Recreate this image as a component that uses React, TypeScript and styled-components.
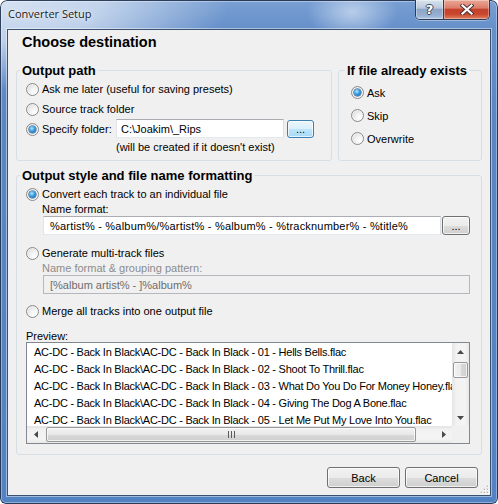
import React from "react";
import styled, { createGlobalStyle, css } from "styled-components";

const Global = createGlobalStyle`
  html, body { margin: 0; padding: 0; background: #ffffff; }
  body { font-family: "Liberation Sans", Arial, sans-serif; font-size: 11px; color: #000; }
  * { box-sizing: border-box; }
`;

const UI_FONT = `"Liberation Sans", Arial, sans-serif`;

const Window = styled.div`
  width: 498px;
  height: 504px;
  display: flex;
  flex-direction: column;
  padding: 0 7px 8px 7px;
  border-radius: 7px 7px 6px 6px;
  background:
    radial-gradient(ellipse 230px 90px at 0 0, rgba(214, 226, 242, 1) 0%, rgba(206, 220, 240, 0.85) 45%, rgba(206, 220, 240, 0) 100%),
    radial-gradient(ellipse 45px 28px at 352px 12px, rgba(196, 214, 238, 0.85), rgba(196, 214, 238, 0)),
    linear-gradient(180deg, #7aa0d3 0px, #6690ca 29px, #5a86c4 120px, #5382c2 100%);
  box-shadow: inset 0 0 0 1px rgba(28, 46, 74, 0.9), inset 0 0 0 2px rgba(255, 255, 255, 0.35);
`;

const TitleBar = styled.div`
  height: 29px;
  flex: none;
  display: flex;
  align-items: flex-start;
  padding: 0 1px 0 1px;
`;

const TitleText = styled.div`
  margin-top: 5px;
  line-height: 18px;
  font-family: "Open Sans", ${UI_FONT};
  font-size: 11px;
  color: #1a1a1a;
  text-shadow: 0 0 6px rgba(255, 255, 255, 0.9), 0 0 2px rgba(255, 255, 255, 0.8);
`;

const CaptionGroup = styled.div`
  margin-left: auto;
  display: flex;
  height: 20px;
  border: 1px solid #2c3c56;
  border-top: none;
  border-radius: 0 0 5px 5px;
  overflow: hidden;
  box-shadow: 0 1px 0 rgba(255, 255, 255, 0.35);
`;

const CaptionButton = styled.div<{ $w: number; $close?: boolean }>`
  width: ${(p) => p.$w}px;
  height: 100%;
  display: flex;
  align-items: center;
  justify-content: center;
  box-shadow: inset 0 0 0 1px rgba(255, 255, 255, 0.35);
  background: ${(p) =>
    p.$close
      ? "linear-gradient(180deg, #eaa796 0%, #dc7d6b 42%, #c4412c 50%, #c9472f 75%, #e2805f 100%)"
      : "linear-gradient(180deg, #d9e3ee 0%, #b9c9dc 42%, #8ea6c6 50%, #97b0d1 80%, #b3c8e4 100%)"};
  & + & {
    border-left: 1px solid #2c3c56;
  }
`;

const HelpGlyph = styled.span`
  font-family: "DejaVu Sans", ${UI_FONT};
  font-weight: bold;
  font-size: 13px;
  line-height: 13px;
  color: #ffffff;
  text-shadow: 1px 0 0 #3a4a62, -1px 0 0 #3a4a62, 0 1px 0 #3a4a62, 0 -1px 0 #3a4a62;
`;

const Client = styled.div`
  position: relative;
  height: 467px;
  flex: none;
  display: flex;
  flex-direction: column;
  padding: 3px 8px 7px 8px;
  border: 1px solid #3c5070;
  background: #f0f0f0;
  box-shadow: 0 0 0 1px rgba(255, 255, 255, 0.45);
`;

const Heading = styled.div`
  height: 18px;
  line-height: 18px;
  padding-left: 6px;
  font-size: 14.5px;
  font-weight: bold;
`;

const GroupRow = styled.div<{ $mt: number }>`
  margin-top: ${(p) => p.$mt}px;
  display: flex;
  gap: 6px;
  align-items: stretch;
`;

const Group = styled.fieldset<{ $w?: number; $pad: string }>`
  margin: 0;
  min-width: 0;
  ${(p) => (p.$w ? css`width: ${p.$w}px; flex: none;` : css`flex: 1;`)}
  border: 1px solid #d5dfe5;
  border-radius: 3px;
  padding: ${(p) => p.$pad};
  display: flex;
  flex-direction: column;
`;

const Legend = styled.legend`
  font-size: 13px;
  font-weight: bold;
  line-height: 15px;
  padding: 0 2px;
  margin-left: -6px;
`;

const RadioRow = styled.div<{ $h: number; $mt?: number }>`
  display: flex;
  align-items: center;
  gap: 3px;
  height: ${(p) => p.$h}px;
  margin-top: ${(p) => p.$mt ?? 0}px;
  white-space: nowrap;
`;

const RadioDot = styled.span<{ $on?: boolean }>`
  position: relative;
  flex: none;
  width: 13px;
  height: 13px;
  border-radius: 50%;
  border: 1px solid #8a8a8a;
  background: radial-gradient(circle at 68% 68%, #ffffff 0%, #f3f3f3 35%, #d2d2d2 100%);
  box-shadow: inset 0 0 0 1px rgba(255, 255, 255, 0.55);
  ${(p) =>
    p.$on &&
    css`
      &::after {
        content: "";
        position: absolute;
        left: 2px;
        top: 2px;
        width: 7px;
        height: 7px;
        border-radius: 50%;
        background: radial-gradient(circle at 40% 35%, #b6eaff 0%, #3d9fe3 42%, #0f5394 100%);
        box-shadow: 0 0 0 0.5px #1b4f82;
      }
    `}
`;

const FolderGrid = styled.div`
  display: grid;
  grid-template-columns: 90px auto;
  grid-template-rows: 20px 17px;
`;

const FieldRow = styled.div<{ $gap: number; $indent?: number }>`
  display: flex;
  align-items: flex-start;
  gap: ${(p) => p.$gap}px;
  margin-left: ${(p) => p.$indent ?? 0}px;
`;

const TextField = styled.input<{ $w?: number; $h: number; $inset: number; $track?: number }>`
  ${(p) => (p.$w ? css`width: ${p.$w}px; flex: none;` : css`flex: 1; min-width: 0;`)}
  height: ${(p) => p.$h}px;
  margin: 0;
  padding: 0 ${(p) => p.$inset}px;
  font-family: ${UI_FONT};
  font-size: 11px;
  letter-spacing: ${(p) => p.$track ?? 0}px;
  color: #000;
  background: #ffffff;
  border: 1px solid;
  border-color: #abadb3 #dbdfe6 #e3e9ef #e2e3ea;
  outline: none;
  &:disabled {
    background: #f0f0f0;
    color: #6d6d6d;
    border-color: #b4b8bc;
  }
`;

const Note = styled.div`
  grid-column: 2;
  line-height: 17px;
  white-space: nowrap;
`;

const SubLabel = styled.div<{ $disabled?: boolean }>`
  height: 13px;
  line-height: 13px;
  padding-left: 16px;
  color: ${(p) => (p.$disabled ? "#8c8c8c" : "#000")};
`;

const PreviewLabel = styled.div`
  margin-top: 10px;
  height: 12px;
  line-height: 12px;
`;

const PushButton = styled.button<{ $hot?: boolean; $w: number; $h: number; $mt?: number }>`
  flex: none;
  width: ${(p) => p.$w}px;
  height: ${(p) => p.$h}px;
  margin: ${(p) => p.$mt ?? 0}px 0 0 0;
  padding: 0;
  font-family: ${UI_FONT};
  font-size: 11px;
  color: #000;
  border: 1px solid ${(p) => (p.$hot ? "#3c7fb1" : "#707070")};
  border-radius: 3px;
  background: ${(p) =>
    p.$hot
      ? "linear-gradient(180deg, #eaf6fd 0%, #d9f0fc 50%, #bee6fd 51%, #a7d9f5 100%)"
      : "linear-gradient(180deg, #f2f2f2 0%, #ebebeb 50%, #dddddd 51%, #cfcfcf 100%)"};
  box-shadow: inset 0 0 0 1px rgba(255, 255, 255, 0.7);
  display: flex;
  align-items: center;
  justify-content: center;
`;

const ListBox = styled.div`
  height: 102px;
  border: 1px solid #828790;
  background: #ffffff;
  display: grid;
  grid-template-columns: 1fr 17px;
  grid-template-rows: 1fr 17px;
`;

const ListRows = styled.div`
  overflow: hidden;
  padding-top: 1px;
`;

const ListRow = styled.div`
  height: 17px;
  line-height: 17px;
  padding-left: 7px;
  white-space: nowrap;
  letter-spacing: -0.25px;
`;

const ScrollTrack = styled.div<{ $vertical?: boolean }>`
  display: flex;
  flex-direction: ${(p) => (p.$vertical ? "column" : "row")};
  align-items: stretch;
  background: ${(p) =>
    p.$vertical
      ? "linear-gradient(90deg, #e4e4e4 0%, #f2f2f2 25%, #f4f4f4 75%, #e8e8e8 100%)"
      : "linear-gradient(180deg, #e4e4e4 0%, #f2f2f2 25%, #f4f4f4 75%, #e8e8e8 100%)"};
`;

const ArrowCell = styled.div`
  width: 17px;
  height: 17px;
  flex: none;
  display: flex;
  align-items: center;
  justify-content: center;
`;

const Thumb = styled.div<{ $vertical?: boolean; $len: number; $offset: number }>`
  flex: none;
  ${(p) =>
    p.$vertical
      ? css`
          height: ${p.$len}px;
          margin: ${p.$offset}px 1px 0 1px;
          background: linear-gradient(90deg, #f3f3f3 0%, #e8e8e8 50%, #d9d9d9 51%, #cfcfcf 100%);
        `
      : css`
          width: ${p.$len}px;
          margin: 1px 0 1px ${p.$offset}px;
          background: linear-gradient(180deg, #f3f3f3 0%, #e8e8e8 50%, #d9d9d9 51%, #cfcfcf 100%);
        `}
  border: 1px solid #989898;
  border-radius: 2px;
  box-shadow: inset 0 0 0 1px rgba(255, 255, 255, 0.7);
  display: flex;
  align-items: center;
  justify-content: center;
`;

const Spacer = styled.div`
  flex: 1;
`;

const Corner = styled.div`
  background: #f0f0f0;
`;

const Footer = styled.div`
  margin-top: 12px;
  display: flex;
  justify-content: flex-end;
  gap: 5px;
  padding-right: 4px;
`;

const Grip = styled.svg`
  position: absolute;
  right: 1px;
  bottom: 1px;
`;

const Radio = ({ on, label, h, mt }: { on?: boolean; label: string; h: number; mt?: number }) => (
  <RadioRow $h={h} $mt={mt}>
    <RadioDot $on={on} />
    <span>{label}</span>
  </RadioRow>
);

const Arrow = ({ dir }: { dir: "up" | "down" | "left" | "right" }) => {
  const pts = {
    up: "0,4 3.5,0 7,4",
    down: "0,0 7,0 3.5,4",
    left: "4,0 4,7 0,3.5",
    right: "0,0 4,3.5 0,7",
  }[dir];
  const vertical = dir === "up" || dir === "down";
  return (
    <ArrowCell>
      <svg width={vertical ? 7 : 4} height={vertical ? 4 : 7} viewBox={vertical ? "0 0 7 4" : "0 0 4 7"}>
        <polygon points={pts} fill="#4a4a4a" />
      </svg>
    </ArrowCell>
  );
};

const base = "AC-DC - Back In Black\\AC-DC - Back In Black - ";
const tracks = [
  "01 - Hells Bells.flac",
  "02 - Shoot To Thrill.flac",
  "03 - What Do You Do For Money Honey.flac",
  "04 - Giving The Dog A Bone.flac",
  "05 - Let Me Put My Love Into You.flac",
];

export default function App() {
  return (
    <>
      <Global />
      <Window>
        <TitleBar>
          <TitleText>Converter Setup</TitleText>
          <CaptionGroup>
            <CaptionButton $w={27}>
              <HelpGlyph>?</HelpGlyph>
            </CaptionButton>
            <CaptionButton $w={46} $close>
              <svg width="14" height="11" viewBox="0 0 14 11">
                <path d="M2.5 1.5 L11.5 9.5 M11.5 1.5 L2.5 9.5" stroke="#4a3030" strokeWidth="4" strokeLinecap="square" />
                <path d="M2.5 1.5 L11.5 9.5 M11.5 1.5 L2.5 9.5" stroke="#ffffff" strokeWidth="2.2" strokeLinecap="square" />
              </svg>
            </CaptionButton>
          </CaptionGroup>
        </TitleBar>
        <Client>
          <Heading>Choose destination</Heading>
          <GroupRow $mt={12}>
            <Group $w={316} $pad="1px 8px 4px 9px">
              <Legend>Output path</Legend>
              <Radio h={20} label="Ask me later (useful for saving presets)" />
              <Radio h={20} label="Source track folder" />
              <FolderGrid>
                <Radio h={20} on label="Specify folder:" />
                <FieldRow $gap={3}>
                  <TextField $w={168} $h={19} $inset={4} readOnly value="C:\Joakim\_Rips" />
                  <PushButton $hot $w={27} $h={18} $mt={1}>
                    ...
                  </PushButton>
                </FieldRow>
                <Note>(will be created if it doesn't exist)</Note>
              </FolderGrid>
            </Group>
            <Group $pad="3px 8px 4px 12px">
              <Legend>If file already exists</Legend>
              <Radio h={23} on label="Ask" />
              <Radio h={23} label="Skip" />
              <Radio h={23} label="Overwrite" />
            </Group>
          </GroupRow>
          <GroupRow $mt={7}>
            <Group $pad="2px 11px 10px 9px">
              <Legend>Output style and file name formatting</Legend>
              <Radio h={18} on label="Convert each track to an individual file" />
              <SubLabel>Name format:</SubLabel>
              <FieldRow $gap={1} $indent={17}>
                <TextField
                  $h={19}
                  $inset={6}
                  $track={0.2}
                  readOnly
                  value="%artist% - %album%/%artist% - %album% - %tracknumber% - %title%"
                />
                <PushButton $w={28} $h={19}>
                  ...
                </PushButton>
              </FieldRow>
              <Radio h={18} mt={9} label="Generate multi-track files" />
              <SubLabel $disabled>Name format &amp; grouping pattern:</SubLabel>
              <FieldRow $gap={0} $indent={17}>
                <TextField $h={19} $inset={6} disabled readOnly value="[%album artist% - ]%album%" />
              </FieldRow>
              <Radio h={18} mt={8} label="Merge all tracks into one output file" />
              <PreviewLabel>Preview:</PreviewLabel>
              <ListBox>
                <ListRows>
                  {tracks.map((t) => (
                    <ListRow key={t}>{base + t}</ListRow>
                  ))}
                </ListRows>
                <ScrollTrack $vertical>
                  <Arrow dir="up" />
                  <Thumb $vertical $len={16} $offset={2} />
                  <Spacer />
                  <Arrow dir="down" />
                </ScrollTrack>
                <ScrollTrack>
                  <Arrow dir="left" />
                  <Thumb $len={370} $offset={2}>
                    <svg width="7" height="7" viewBox="0 0 7 7">
                      <path d="M0.5 0 V7 M3.5 0 V7 M6.5 0 V7" stroke="#5a5a5a" strokeWidth="1" />
                    </svg>
                  </Thumb>
                  <Spacer />
                  <Arrow dir="right" />
                </ScrollTrack>
                <Corner />
              </ListBox>
            </Group>
          </GroupRow>
          <Footer>
            <PushButton $w={73} $h={21}>
              Back
            </PushButton>
            <PushButton $w={73} $h={21}>
              Cancel
            </PushButton>
          </Footer>
          <Grip width="9" height="9" viewBox="0 0 9 9">
            {[
              [7, 1],
              [7, 4],
              [4, 4],
              [7, 7],
              [4, 7],
              [1, 7],
            ].map(([x, y]) => (
              <g key={`${x}-${y}`}>
                <rect x={x + 0.5} y={y + 0.5} width="1.2" height="1.2" fill="#ffffff" />
                <rect x={x - 0.3} y={y - 0.3} width="1.2" height="1.2" fill="#a9a9a9" />
              </g>
            ))}
          </Grip>
        </Client>
      </Window>
    </>
  );
}
